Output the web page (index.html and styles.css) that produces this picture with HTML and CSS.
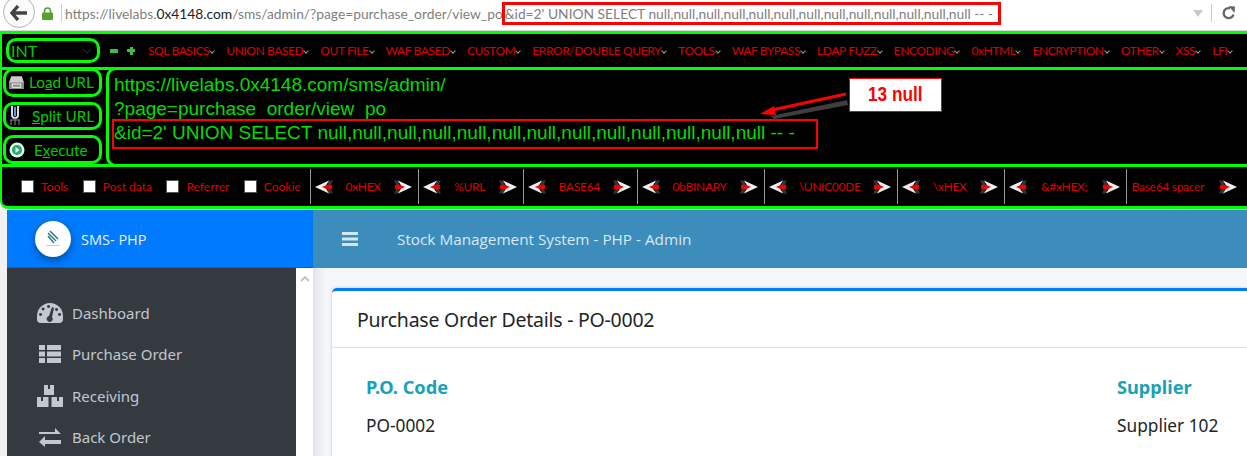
FILE: index.html
```html
<!DOCTYPE html>
<html lang="en">
<head>
<meta charset="utf-8">
<title>Purchase Order Details</title>
<link rel="stylesheet" href="styles.css">
</head>
<body>
<header class="browser">
  <button class="back"><svg width="18" height="16" viewBox="0 0 18 16"><path d="M8 1 2 8l6 7M2.5 8H17" fill="none" stroke="#444" stroke-width="3.4"/></svg></button>
  <svg class="lock" width="11" height="13" viewBox="0 0 11 13"><path d="M2.5 6V4a3 3 0 0 1 6 0v2" fill="none" stroke="#5aa02c" stroke-width="1.6"/><rect y="5.5" width="11" height="7.5" rx="1" fill="#5aa02c"/></svg>
  <span class="sep"></span>
  <div class="url">https://livelabs.<b>0x4148.com</b>/sms/admin/?page=purchase_order/view_po<span class="url-q">&amp;id=2' UNION SELECT null,null,null,null,null,null,null,null,null,null,null,null,null -- -</span></div>
  <span class="drop"></span>
  <span class="sep sep-r"></span>
  <svg class="reload" width="14" height="14" viewBox="0 0 14 14"><path d="M11.5 8.5A5 5 0 1 1 8 2.3" fill="none" stroke="#666" stroke-width="2.4"/><path d="M6.5 0 13 .5 12.5 7Z" fill="#666"/></svg>
</header>

<section class="hackbar">
  <div class="hb-top">
    <div class="select">INT<svg width="10" height="6" viewBox="0 0 10 6"><path d="M1 1l4 4 4-4" fill="none" stroke="#333" stroke-width="1"/></svg></div>
    <div class="zoomers"><span class="minus"></span><span class="plus"></span></div>
    <nav class="menu">
      <span>SQL BASICS<i></i></span><span>UNION BASED<i></i></span><span>OUT FILE<i></i></span><span>WAF BASED<i></i></span><span>CUSTOM<i></i></span><span>ERROR/DOUBLE QUERY<i></i></span><span>TOOLS<i></i></span><span>WAF BYPASS<i></i></span><span>LDAP FUZZ<i></i></span><span>ENCODING<i></i></span><span>0xHTML<i></i></span><span>ENCRYPTION<i></i></span><span>OTHER<i></i></span><span>XSS<i></i></span><span>LFI<i></i></span>
    </nav>
  </div>
  <div class="hb-mid">
    <div class="actions">
      <button class="act act-load">
        <svg width="17" height="15" viewBox="0 0 16 14"><path d="M3 1h10l2 6v6H1V7z" fill="#ccc"/><rect x="1" y="7" width="14" height="6" fill="#888"/><rect x="4" y="8.5" width="8" height="3" fill="none" stroke="#eee"/></svg>
        <span>Lo<u>a</u>d URL</span></button>
      <button class="act">
        <svg width="12" height="22" viewBox="0 0 12 22"><path d="M3 1v9a3 3 0 0 0 6 0V1" fill="none" stroke="#cde" stroke-width="2"/><path d="M6 2v9" stroke="#69c" stroke-width="2"/><path d="M1 15h10M2 15v5M6 13v7M10 15v5" stroke="#888"/></svg>
        <span class="split"><u>S</u>plit URL</span></button>
      <button class="act">
        <svg width="16" height="16" viewBox="0 0 16 16"><circle cx="8" cy="8" r="7.5" fill="#dfd"/><circle cx="8" cy="8" r="5" fill="#2a7"/><path d="M6.5 5l4 3-4 3z" fill="#fff"/></svg>
        <span class="exec">E<u>x</u>ecute</span></button>
    </div>
    <div class="query">
      <div>https://livelabs.0x4148.com/sms/admin/</div>
      <div>?page=purchase<span class="clipped">_</span>order/view<span class="clipped">_</span>po</div>
      <div>&amp;id=2' UNION SELECT null,null,null,null,null,null,null,null,null,null,null,null,null -- -</div>
    </div>
  </div>
  <div class="hb-bottom">
    <label class="chk chk-1"><span class="box"></span>Tools</label>
    <label class="chk"><span class="box"></span>Post data</label>
    <label class="chk"><span class="box"></span>Referrer</label>
    <label class="chk chk-last"><span class="box"></span>Cookie</label>
    <div class="enc w108"><svg class="ar"><use href="#al"/></svg><span>0xHEX</span><svg class="ar"><use href="#ar"/></svg></div>
    <div class="enc w105"><svg class="ar"><use href="#al"/></svg><span>%URL</span><svg class="ar"><use href="#ar"/></svg></div>
    <div class="enc w114"><svg class="ar"><use href="#al"/></svg><span>BASE64</span><svg class="ar"><use href="#ar"/></svg></div>
    <div class="enc w127"><svg class="ar"><use href="#al"/></svg><span>0bBINARY</span><svg class="ar"><use href="#ar"/></svg></div>
    <div class="enc w133"><svg class="ar"><use href="#al"/></svg><span>\UNIC00DE</span><svg class="ar"><use href="#ar"/></svg></div>
    <div class="enc w107"><svg class="ar"><use href="#al"/></svg><span>\xHEX</span><svg class="ar"><use href="#ar"/></svg></div>
    <div class="enc w122"><svg class="ar"><use href="#al"/></svg><span>&amp;#xHEX;</span><svg class="ar"><use href="#ar"/></svg></div>
    <div class="enc w117 noleft"><span>Base64 spacer</span><svg class="ar"><use href="#ar"/></svg></div>
  </div>
</section>

<svg class="defs" width="0" height="0">
  <defs>
    <g id="al"><path d="M13 1 18 0 15 7l3 7-5-1z" fill="#333"/><path d="M0 7 14 .5 10 7l4 6.500z" fill="#eee"/><path d="M7 7l6-2.500 4 .5v4l-4 .5z" fill="#e00"/></g>
    <g id="ar"><path d="M5 1 0 0 3 7 0 14l5-1z" fill="#333"/><path d="M18 7 4 .5 8 7l-4 6.500z" fill="#eee"/><path d="M11 7 5 4.500 1 5v4l4 .5z" fill="#e00"/></g>
  </defs>
</svg>

<main class="app">
  <aside class="side">
    <div class="brand">
      <div class="logo">
        <svg width="12" height="14" viewBox="0 0 12 14"><path d="M1 3 9 11M3 1l8 8M1 6l6 7" stroke="#2a7a80" stroke-width="1.5"/></svg>
        <small>LOREM IPSUM</small>
      </div>
      <span class="brand-name">SMS- PHP</span>
    </div>
    <div class="side-body">
      <ul class="nav">
        <li><svg width="26" height="20" viewBox="0 0 26 20"><path fill-rule="evenodd" fill="#c2c7d0" d="M13 0a13 13 0 0 1 13 13v3a4 4 0 0 1-3 4H3a4 4 0 0 1-3-4v-3A13 13 0 0 1 13 0zM15 4l-3 9a3 3 0 1 0 3 1l2-9zM6 4.500a1.500 1.500 0 1 0 .1 0zM3.500 10a1.500 1.500 0 1 0 .1 0zM11.500 2a1.500 1.500 0 1 0 .1 0zM22.500 10a1.500 1.500 0 1 0 .1 0zM19.500 5a1.500 1.500 0 1 0 .1 0z"/></svg>Dashboard</li>
        <li><svg width="24" height="20" viewBox="0 0 24 20"><path fill="#c2c7d0" d="M1 1h6v5H1zM9 1h14v5H9zM1 7.500h6v5H1zM9 7.500h14v5H9zM1 14h6v5H1zM9 14h14v5H9z"/></svg>Purchase Order</li>
        <li><svg width="26" height="22" viewBox="0 0 26 22"><path fill="#c2c7d0" fill-rule="evenodd" d="M7 0h4v4h2V0h4v10H7zM0 12h4v4h2v-4h5.500v10H0zM14.500 12H20v4h2v-4h4v10H14.500z"/></svg>Receiving</li>
        <li><svg width="24" height="20" viewBox="0 0 24 20"><path fill="#c2c7d0" d="M1 5h16V1l6 6-.1.100H1zM23 13H7V9l-6 6 6 5v-3h16z"/></svg>Back Order</li>
      </ul>
      <div class="scroll"><svg width="10" height="6" viewBox="0 0 10 6"><path d="M1 5l4-4 4 4" fill="none" stroke="#c4c4c4" stroke-width="2"/></svg></div>
    </div>
  </aside>
  <div class="page">
    <div class="topbar">
      <svg width="16" height="14" viewBox="0 0 16 14"><path fill="#d6e6f0" d="M0 0h16v3H0zM0 5.500h16v3H0zM0 11h16v3H0z"/></svg>
      <span>Stock Management System - PHP - Admin</span>
    </div>
    <div class="content">
      <div class="card">
        <div class="card-head">Purchase Order Details - PO-0002</div>
        <div class="card-body">
          <div class="col"><h4>P.O. Code</h4><p>PO-0002</p></div>
          <div class="col"><h4>Supplier</h4><p>Supplier 102</p></div>
        </div>
      </div>
    </div>
  </div>
</main>

<div class="mark mark-url"></div>
<div class="mark mark-query"></div>
<svg class="arrow" width="92" height="34" viewBox="0 0 92 34"><path d="M12 27 88 11l1 5-74 14z" fill="#3e3e3e"/><path d="M13 21 87 5" stroke="#f00" stroke-width="3"/><path d="M1 25 15 17l2 9z" fill="#f00"/></svg>
<div class="callout"><span>13 null</span></div>
</body>
</html>
```
FILE: styles.css
```css
*{box-sizing:border-box}
html,body{margin:0;padding:0}
body{width:1247px;height:456px;overflow:hidden;background:#fff;font-family:"Noto Sans",sans-serif;position:relative}

.browser{height:31px;display:flex;align-items:center;background:#fff;border-bottom:1px solid #d8d8d8;padding-right:11px;overflow:hidden}
.back{width:32px;height:32px;border-radius:50%;border:1px solid #b5b5b5;background:#fbfbfb;margin:-6px 0 0 3px;padding:0;display:flex;align-items:center;justify-content:center;flex:none}
.back svg{margin-top:1px}
.lock{margin:-4px 0 0 7px;flex:none}
.sep{width:1px;height:18px;background:#ccc;margin:-4px 0 0 8px;flex:none}
.url{margin:-4px 0 0 3px;font:13.8px Lato,sans-serif;color:#7f7f7f;white-space:nowrap;width:1128px;overflow:hidden}
.url b{font-weight:400;color:#222}
.url-q{margin-left:2px}
.drop{width:0;height:0;border:5px solid transparent;border-top:7px solid #c8c8c8;border-bottom:0;margin:-3px 0 0 1px;flex:none}
.sep-r{margin-left:8px}
.reload{margin:-4px 0 0 10px;flex:none}

.hackbar{height:178px;background:#000;border:3px solid #0f0;border-right:0;border-left-width:2px;border-bottom-left-radius:8px;display:flex;flex-direction:column;overflow:hidden}
.hb-top{height:33px;display:flex;align-items:center;flex:none}
.select{width:94px;height:25px;margin-left:4px;border:3px solid #0f0;border-radius:10px;background:#000;color:#0c0;font:16px/19px Lato,sans-serif;padding-left:2px;display:flex;align-items:center;justify-content:space-between;padding-right:5px;flex:none}
.zoomers{display:flex;gap:9px;margin-left:10px;flex:none}
.minus{width:8px;height:4px;background:#4b4;margin-top:2px}
.plus{width:8px;height:8px;background:linear-gradient(#4b4,#4b4) center/8px 3px no-repeat,linear-gradient(#4b4,#4b4) center/3px 8px no-repeat}
.menu{display:flex;gap:11px;margin-left:13px;white-space:nowrap;color:#d00;font:12px Lato,sans-serif;letter-spacing:-.4px}
.menu span{display:flex;align-items:center}
.menu i{width:4px;height:4px;border-right:1px solid #999;border-bottom:1px solid #999;transform:rotate(45deg);margin:0 1px 0 1px}

.hb-mid{height:100px;display:flex;border-top:3px solid #0f0;border-bottom:3px solid #0f0;flex:none}
.actions{width:101px;display:flex;flex-direction:column;gap:5px;flex:none;margin-top:-2px;padding-left:1px}
.act{height:29px;width:99px;border:3px solid #0f0;border-radius:10px;background:#000;color:#0c0;font:15.3px Lato,sans-serif;display:flex;align-items:center;padding:0 0 0 3px;gap:5px;white-space:nowrap}
.act-load{padding-left:2px;gap:4px}
.split{margin-left:6px}
.exec{margin-left:4px}
.query{flex:1;margin:-3px 0 -3px 3px;border:3px solid #0f0;border-right:0;border-radius:10px 0 0 10px;padding:3px 0 0 5px;color:#0d0;font:19px/24px "Liberation Sans",sans-serif;white-space:nowrap}
.clipped{color:transparent}

.hb-bottom{flex:1;display:flex;align-items:center;color:#d00;font:12px Lato,sans-serif;white-space:nowrap}
.chk{display:flex;align-items:center;gap:7px;margin-right:14.5px}
.chk-1{margin-left:19px}
.chk-last{margin-right:9px}
.box{width:13px;height:13px;background:#fff;border:1px solid #555;flex:none}
.enc{height:35px;border-left:1px solid #999;display:flex;align-items:center;justify-content:space-between;padding:0 6px 0 4px;flex:none;letter-spacing:-.3px}
.ar{width:18px;height:14px;flex:none}
.w108{width:108px}.w105{width:105px}.w114{width:114px}.w127{width:127px}.w133{width:133px}.w107{width:107px}.w122{width:122px}.w117{width:117px}
.noleft{padding-left:5px}
.defs{position:absolute}

.app{height:247px;display:flex;background:#f1f1f1;padding:1px 0 0 7px;overflow:hidden}
.side{width:306px;flex:none;display:flex;flex-direction:column}
.brand{height:58px;background:#007bff;display:flex;align-items:center;padding-left:28px;gap:10px;color:#e8f1fb;font:14.5px "Open Sans",sans-serif;flex:none;border-bottom:1px solid #4b545c}
.brand-name{margin-top:1px}
.logo{width:36px;height:36px;border-radius:50%;background:#fff;box-shadow:0 3px 8px rgba(0,0,0,.4);display:flex;flex-direction:column;align-items:center;justify-content:center}
.logo small{font-size:2px;color:#555;line-height:3px}
.side-body{flex:1;display:flex}
.nav{list-style:none;margin:0;padding:24px 0 0 30px;flex:1;background:#343a40;color:#c2c7d0;font:15px/24px "Noto Sans",sans-serif}
.nav li{height:41.5px;display:flex;align-items:center;gap:9px}
.nav svg{width:26px;flex:none}
.scroll{width:17px;background:#fff;display:flex;justify-content:center;padding-top:8px;flex:none}
.page{flex:1;display:flex;flex-direction:column;min-width:0}
.topbar{height:58px;background:#3c8dbc;color:#d9e8f2;display:flex;align-items:center;padding-left:29px;gap:39px;font:15.3px "Open Sans",sans-serif;flex:none;box-shadow:0 1px 3px rgba(0,0,0,.1)}
.content{flex:1;background:linear-gradient(90deg,#e2e3e6,#f4f6f9 12px);padding:20px 0 0 19px;overflow:hidden}
.card{background:#fff;border-top:3px solid #007bff;border-radius:5px 0 0 0;box-shadow:0 0 3px rgba(0,0,0,.2);height:300px}
.card-head{height:57px;border-bottom:1px solid #ddd;padding-left:25px;display:flex;align-items:center;font-size:19.5px;color:#212529;letter-spacing:-.25px}
.card-body{display:flex;padding:26px 0 0 34px;color:#212529}
.col{width:751px;flex:none}
.col h4{margin:0;color:#17a2b8;font-size:18.2px;line-height:26px;font-weight:700}
.col p{margin:13px 0 0;font-size:17.3px;line-height:26px}

.mark{position:absolute;border:2px solid #f00}
.mark-url{left:502px;top:2px;width:499px;height:23px;border-width:3px}
.mark-query{left:112px;top:119px;width:706px;height:30px}
.arrow{position:absolute;left:759px;top:89px}
.callout{position:absolute;left:849px;top:78px;width:93px;height:34px;background:#fff;border:1px solid #f00;color:#f00;font:700 21px/30px "Liberation Sans",sans-serif;text-align:center}
.callout span{display:inline-block;transform:scaleX(.82)}
```
